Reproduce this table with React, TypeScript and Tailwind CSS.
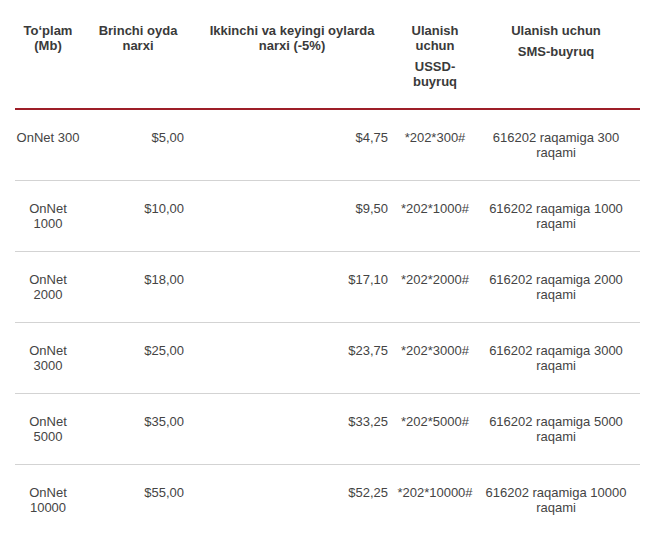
const rows = [
  { pack: 'OnNet 300', first: '$5,00', next: '$4,75', ussd: '*202*300#', sms: '616202 raqamiga 300 raqami' },
  { pack: 'OnNet 1000', first: '$10,00', next: '$9,50', ussd: '*202*1000#', sms: '616202 raqamiga 1000 raqami' },
  { pack: 'OnNet 2000', first: '$18,00', next: '$17,10', ussd: '*202*2000#', sms: '616202 raqamiga 2000 raqami' },
  { pack: 'OnNet 3000', first: '$25,00', next: '$23,75', ussd: '*202*3000#', sms: '616202 raqamiga 3000 raqami' },
  { pack: 'OnNet 5000', first: '$35,00', next: '$33,25', ussd: '*202*5000#', sms: '616202 raqamiga 5000 raqami' },
  { pack: 'OnNet 10000', first: '$55,00', next: '$52,25', ussd: '*202*10000#', sms: '616202 raqamiga 10000 raqami' },
]

const cols = 'grid grid-cols-[66px_114px_194px_92px_150px] pr-[9px]'

export default function App() {
  return (
    <div className="w-[658px] h-[535px] bg-white pl-[15px] font-['Liberation_Sans',Arial,sans-serif] text-[13px] leading-[15px] overflow-hidden">
      <div className="w-[625px]">
        <div className={`${cols} pt-[23px] pb-[19px] border-b-2 border-[#9d1e28] font-bold text-[#3a3a3a] text-center`}>
          <div className="px-1">To‘plam (Mb)</div>
          <div className="px-[11px]">Brinchi oyda narxi</div>
          <div className="px-1">Ikkinchi va keyingi oylarda narxi (-5%)</div>
          <div className="px-2 flex flex-col gap-[6px]">
            <span>Ulanish uchun</span>
            <span>USSD-buyruq</span>
          </div>
          <div className="px-1 flex flex-col gap-[6px]">
            <span>Ulanish uchun</span>
            <span>SMS-buyruq</span>
          </div>
        </div>

        {rows.map((r, i) => (
          <div
            key={r.pack}
            className={`${cols} pt-5 pb-5 text-[#444] ${i < rows.length - 1 ? 'border-b border-[#d3d3d3]' : ''}`}
          >
            <div className="text-center h-[30px]">{r.pack}</div>
            <div className="pr-[11px] text-right">{r.first}</div>
            <div className="pr-[1px] text-right">{r.next}</div>
            <div className="px-1 text-center">{r.ussd}</div>
            <div className="px-[1px] text-center">{r.sms}</div>
          </div>
        ))}
      </div>
    </div>
  )
}
